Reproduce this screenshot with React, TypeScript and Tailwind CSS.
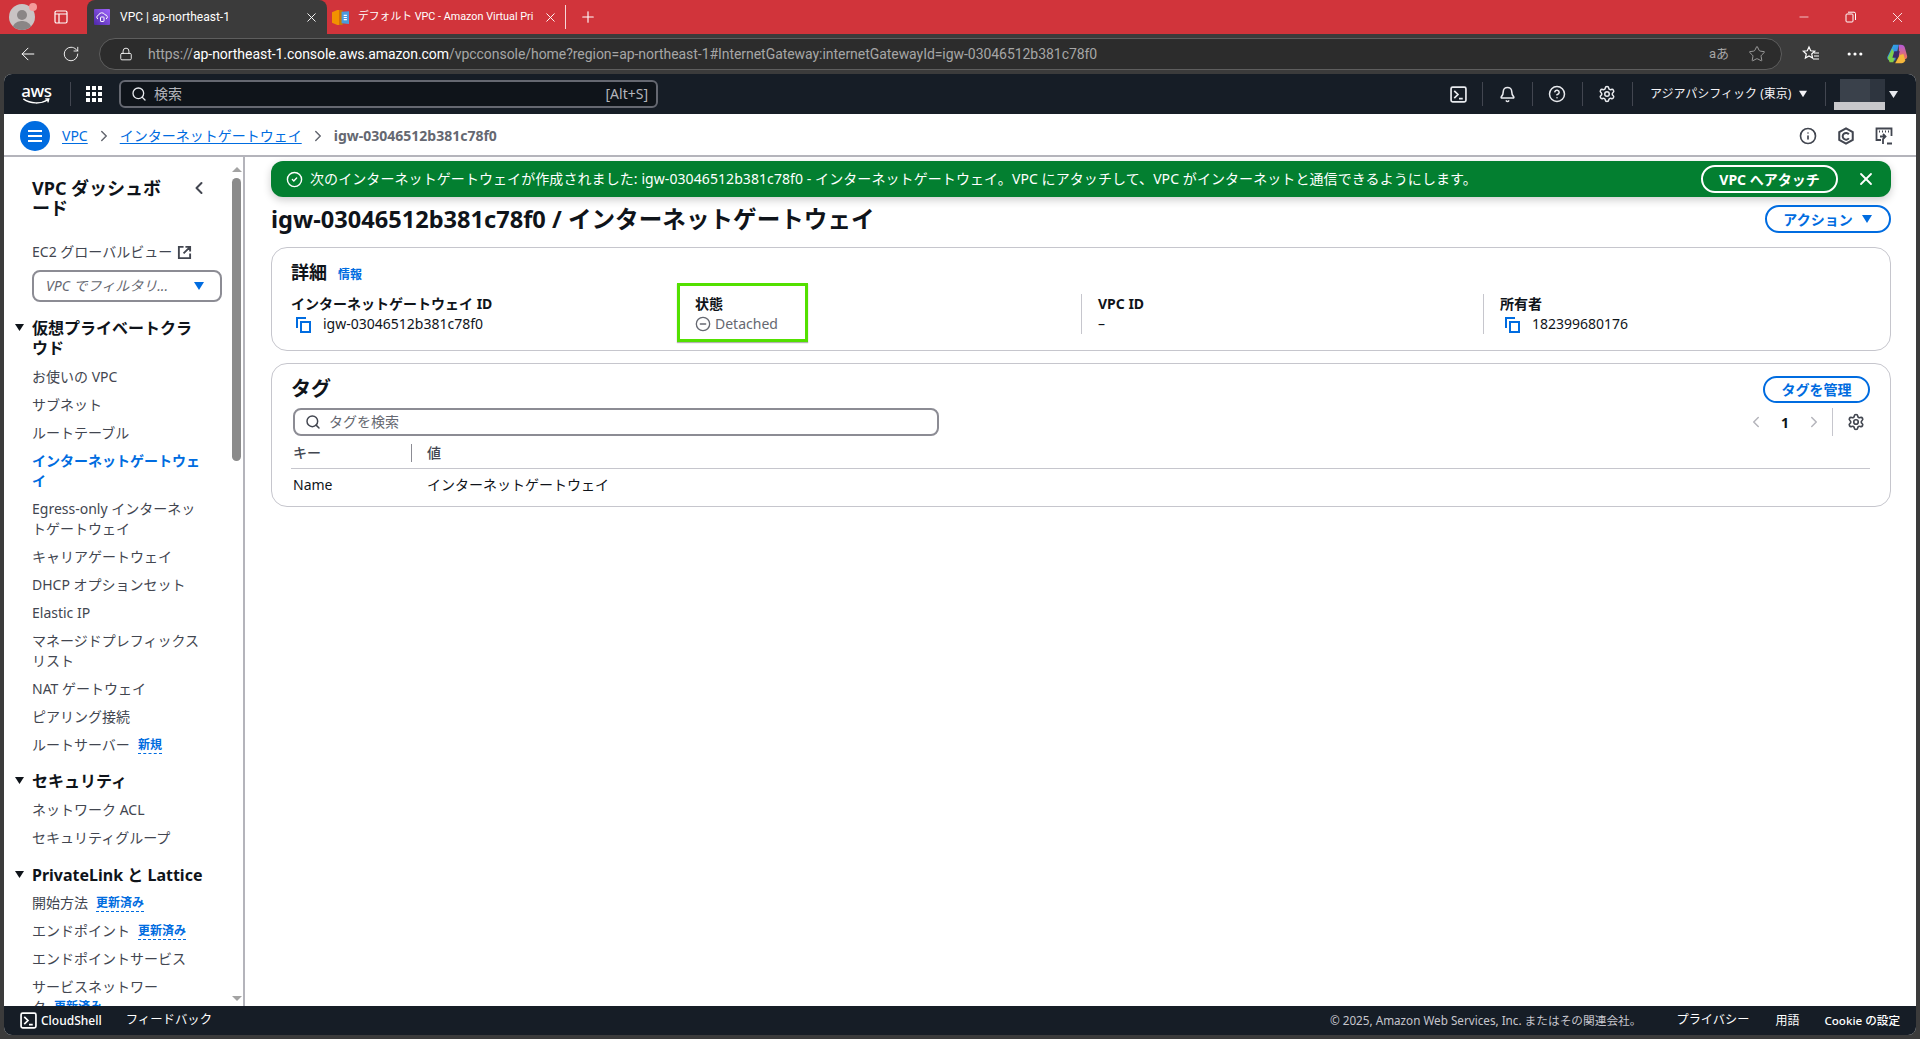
import React from 'react';
import {
  ArrowLeft,
  Bell,
  ChevronLeft,
  ChevronRight,
  CircleCheck,
  CircleHelp,
  CircleMinus,
  Ellipsis,
  Info,
  Lock,
  Minus,
  Plus,
  RotateCw,
  Search,
  Settings,
  Star,
  X,
} from 'lucide-react';

const font = 'font-["Noto_Sans","Noto_Sans_CJK_JP",sans-serif]';
const chromeFont = 'font-["Roboto","Noto_Sans_CJK_JP",sans-serif]';

function Caret({ className }: { className: string }) {
  return (
    <svg viewBox="0 0 12 10" className={className} fill="currentColor">
      <path d="M1 1h10L6 9z" />
    </svg>
  );
}

function CopyIcon() {
  return (
    <svg viewBox="0 0 17 17" className="w-[17px] h-[17px] text-[#006ce0]" fill="none" stroke="currentColor" strokeWidth="2">
      <path d="M2 12V2h9" />
      <rect x="6" y="6" width="9" height="10" />
    </svg>
  );
}

function TerminalIcon({ size }: { size: string }) {
  return (
    <svg viewBox="0 0 16 16" className={size} fill="none" stroke="currentColor" strokeWidth="1.6">
      <rect x="1" y="1" width="14" height="14" rx="1.5" />
      <path d="M4 4.5 7.5 8 4 11.5M8.5 11.8H12" />
    </svg>
  );
}

function VpcFavicon() {
  return (
    <svg viewBox="0 0 16 16" className="w-4 h-4">
      <defs>
        <linearGradient id="vpcg" x1="0" y1="1" x2="1" y2="0">
          <stop offset="0" stopColor="#4d27a8" />
          <stop offset="1" stopColor="#a166ff" />
        </linearGradient>
      </defs>
      <rect width="16" height="16" rx="1" fill="url(#vpcg)" />
      <path d="M4 10a2 2 0 0 1 .5-3.8A3.5 3.5 0 0 1 11 5.8 2.2 2.2 0 0 1 12 10" fill="none" stroke="#fff" strokeWidth="1" />
      <rect x="6.5" y="8" width="3.5" height="4.5" rx=".6" fill="none" stroke="#fff" strokeWidth="1" />
    </svg>
  );
}

function DocsFavicon() {
  return (
    <svg viewBox="0 0 16 16" className="w-[17px] h-[17px]">
      <path d="M0 3 5 1h2v14H5l-5-2z" fill="#f29100" />
      <path d="M7 1h3v14H7z" fill="#c97a00" />
      <path d="M9 2.500 16 2v12l-7-.5z" fill="#4a9bdc" />
      <path d="M11 6h3M11 8h3M11 10h3" stroke="#fff" strokeWidth="1" />
    </svg>
  );
}

function Copilot() {
  return (
    <svg viewBox="0 0 24 24" className="w-[22px] h-[22px]">
      <defs>
        <linearGradient id="cpa" x1="0" y1="0" x2="1" y2="1">
          <stop offset="0" stopColor="#2bb8e8" />
          <stop offset="1" stopColor="#3f6fe0" />
        </linearGradient>
        <linearGradient id="cpb" x1="0" y1="0" x2="0" y2="1">
          <stop offset="0" stopColor="#b45ad8" />
          <stop offset="1" stopColor="#f2754e" />
        </linearGradient>
      </defs>
      <path d="M8 2h6l-4 17H4.5C2 19 1 17 1.6 15z" fill="url(#cpa)" />
      <path d="M2 16 7 6l3 8-2 7H4z" fill="#7fcf4d" />
      <path d="M14 2h2c3 0 4 1.500 4.500 3L23 14c.5 2-.5 4-3 4h-6z" fill="url(#cpb)" />
      <path d="M10 22h7c2 0 3-1 4-3l-2-7-4 1z" fill="#f6b73c" />
      <path d="M9 9h6l-2 7H7z" fill="#3a2a6b" />
    </svg>
  );
}

function NavCell({ children }: { children: React.ReactNode }) {
  return (
    <div className="relative w-[50px] h-full flex items-center justify-center text-[#e8eaee]">
      <span className="absolute left-0 top-[8px] h-[24px] w-px bg-[#424650]" />
      {children}
    </div>
  );
}

function Item({ children, active }: { children: React.ReactNode; active?: boolean }) {
  return (
    <li className={active ? 'font-bold text-[#006ce0]' : 'text-[#424650]'}>
      {children}
    </li>
  );
}

function Badge({ label }: { label: string }) {
  return (
    <span className="inline-block align-top ml-2 h-[19px] leading-[19px] text-[12px] font-bold text-[#006ce0] border-b border-dashed border-[#006ce0]">{label}</span>
  );
}

function SectionTitle({ children, className }: { children: React.ReactNode; className: string }) {
  return (
    <div className={`relative text-[16px] font-bold leading-5 text-[#0f141a] ${className}`}>
      <Caret className="absolute -left-[18px] top-[5px] w-[11px] h-[9px] text-[#0f141a]" />
      {children}
    </div>
  );
}

function Sidebar() {
  return (
    <aside className="w-[241px] shrink-0 flex border-r-2 border-[#b4b4bb] overflow-hidden">
      <div className="w-[226px] pl-[28px] pt-[21px] shrink-0 text-[14px] leading-5">
        <div className="flex justify-between pr-[21px]">
          <div className="w-[138px] text-[18px] font-bold text-[#0f141a]">VPC ダッシュボード</div>
          <ChevronLeft className="w-[20px] h-[20px] text-[#424650] mt-[0px]" strokeWidth={2.4} />
        </div>
        <div className="mt-[24px] flex items-center gap-[5px] text-[#424650]">
          EC2 グローバルビュー
          <svg viewBox="0 0 16 16" className="w-[15px] h-[15px]" fill="none" stroke="currentColor" strokeWidth="2">
            <path d="M7 2H2v12h12V9M9 2h5v5M14 2 7 9" />
          </svg>
        </div>
        <div className="mt-[8px] w-[190px] h-[32px] rounded-[8px] border-2 border-[#8c8c94] flex items-center justify-between pl-[12px] pr-[15px] italic text-[#656871]">
          VPC でフィルタリ...
          <Caret className="w-[12px] h-[10px] text-[#006ce0]" />
        </div>
        <SectionTitle className="mt-[16px] w-[174px]">仮想プライベートクラウド</SectionTitle>
        <ul className="mt-[9px] w-[174px] flex flex-col gap-2">
          <Item>お使いの VPC</Item>
          <Item>サブネット</Item>
          <Item>ルートテーブル</Item>
          <Item active>インターネットゲートウェイ</Item>
          <Item>Egress-only インターネットゲートウェイ</Item>
          <Item>キャリアゲートウェイ</Item>
          <Item>DHCP オプションセット</Item>
          <Item>Elastic IP</Item>
          <Item>マネージドプレフィックスリスト</Item>
          <Item>NAT ゲートウェイ</Item>
          <Item>ピアリング接続</Item>
          <Item>
            ルートサーバー
            <Badge label="新規" />
          </Item>
        </ul>
        <SectionTitle className="mt-[16px]">セキュリティ</SectionTitle>
        <ul className="mt-[9px] flex flex-col gap-2">
          <Item>ネットワーク ACL</Item>
          <Item>セキュリティグループ</Item>
        </ul>
        <SectionTitle className="mt-[17px]">PrivateLink と Lattice</SectionTitle>
        <ul className="mt-2 w-[174px] flex flex-col gap-2">
          <Item>
            開始方法
            <Badge label="更新済み" />
          </Item>
          <Item>
            エンドポイント
            <Badge label="更新済み" />
          </Item>
          <Item>エンドポイントサービス</Item>
          <Item>
            サービスネットワー
            <br />
            ク
            <Badge label="更新済み" />
          </Item>
        </ul>
      </div>
      <div className="w-[13px] shrink-0 flex flex-col items-center pt-[10px] pb-[5px]">
        <span className="w-0 h-0 border-x-[5px] border-x-transparent border-b-[5px] border-b-[#a3a3a3]" />
        <span className="mt-[6px] w-[9px] h-[283px] rounded-full bg-[#8b8b8b]" />
        <span className="mt-auto w-0 h-0 border-x-[5px] border-x-transparent border-t-[5px] border-t-[#a3a3a3]" />
      </div>
    </aside>
  );
}

function Field({ label, children, first }: { label: string; children: React.ReactNode; first?: boolean }) {
  return (
    <div className={first ? '' : 'border-l border-[#c6c6cd] pl-[16px]'}>
      <div className="font-bold leading-5 text-[#0f141a]">{label}</div>
      <div className="leading-5 text-[#0f141a]">{children}</div>
    </div>
  );
}

function Main() {
  return (
    <main className="flex-1 pl-[26px] pr-[25px] pt-[4px] text-[14px]">
      <div className="h-[36px] rounded-[12px] bg-[#037f30] text-white flex items-center pl-[15px] pr-[15px] shadow-[0_3px_8px_rgba(0,0,0,0.2)]">
        <CircleCheck className="w-[17px] h-[17px]" strokeWidth={2} />
        <span className="ml-[7px] flex-1 -mt-[2px] tracking-[0.08px]">
          次のインターネットゲートウェイが作成されました: igw-03046512b381c78f0 - インターネットゲートウェイ。VPC にアタッチして、VPC がインターネットと通信できるようにします。
        </span>
        <button className="w-[137px] h-[28px] rounded-full border-2 border-white font-bold">VPC へアタッチ</button>
        <X className="ml-[18px] w-[20px] h-[20px]" strokeWidth={2.2} />
      </div>

      <div className="mt-[6px] h-[32px] flex items-center justify-between">
        <h1 className="text-[23.6px] font-bold leading-8 text-[#0f141a]">igw-03046512b381c78f0 / インターネットゲートウェイ</h1>
        <button className="w-[126px] h-[28px] rounded-full border-2 border-[#006ce0] text-[#006ce0] font-bold flex items-center justify-center gap-[8px]">
          アクション
          <Caret className="w-[12px] h-[10px]" />
        </button>
      </div>

      <section className="relative mt-[12px] h-[104px] rounded-[16px] border border-[#c6c6cd] pl-[19px] pt-[13px]">
        <div className="h-[22px] flex items-center gap-[11px]">
          <h2 className="text-[18px] font-bold text-[#0f141a]">詳細</h2>
          <span className="text-[12px] font-bold text-[#006ce0] mt-[5px]">情報</span>
        </div>
        <div className="mt-[11px] grid grid-cols-[387px_403px_402px_1fr]">
          <Field label="インターネットゲートウェイ ID" first>
            <span className="flex items-center gap-[11px] pl-[4px]">
              <CopyIcon />
              igw-03046512b381c78f0
            </span>
          </Field>
          <Field label="状態">
            <span className="flex items-center gap-[4px] text-[#656871]">
              <CircleMinus className="w-[16px] h-[16px]" strokeWidth={2} />
              Detached
            </span>
          </Field>
          <Field label="VPC ID">–</Field>
          <Field label="所有者">
            <span className="flex items-center gap-[11px] pl-[4px]">
              <CopyIcon />
              182399680176
            </span>
          </Field>
        </div>
        <div className="absolute left-[405px] top-[35px] w-[131px] h-[59px] border-[3px] border-[#53e000] shadow-[0_1px_1px_rgba(0,0,0,0.3)]" />
      </section>

      <section className="mt-[12px] h-[144px] rounded-[16px] border border-[#c6c6cd] pl-[19px] pr-[20px] pt-[12px]">
        <div className="h-[27px] flex items-center justify-between">
          <h2 className="text-[20px] font-bold text-[#0f141a] -mt-[2px]">タグ</h2>
          <button className="w-[107px] h-[27px] rounded-full border-2 border-[#006ce0] text-[#006ce0] font-bold">タグを管理</button>
        </div>
        <div className="mt-[5px] h-[28px] flex items-center justify-between">
          <div className="ml-[2px] w-[646px] h-[28px] rounded-[8px] border-2 border-[#8c8c94] flex items-center pl-[10px] gap-[8px] text-[#656871]">
            <Search className="w-[16px] h-[16px] text-[#424650]" strokeWidth={2.2} />
            <span className="-mt-[2px]">タグを検索</span>
          </div>
          <div className="flex items-center h-[28px] text-[#0f141a]">
            <ChevronLeft className="w-[18px] h-[18px] text-[#b4b4bb]" />
            <span className="w-[40px] text-center font-bold">1</span>
            <ChevronRight className="w-[18px] h-[18px] text-[#b4b4bb]" />
            <span className="ml-[9px] h-[28px] w-px bg-[#c6c6cd]" />
            <Settings className="ml-[14px] mr-[5px] w-[18px] h-[18px] text-[#424650]" strokeWidth={2.2} />
          </div>
        </div>
        <div className="mt-[7px] h-[26px] flex items-start border-b border-[#c6c6cd] text-[#424650] font-medium pl-[2px]">
          <span className="w-[118px] leading-5">キー</span>
          <span className="h-[18px] w-px mt-[1px] bg-[#8c8c94]" />
          <span className="ml-[15px] leading-5">値</span>
        </div>
        <div className="mt-[6px] flex pl-[2px] leading-5 text-[#0f141a]">
          <span className="w-[134px]">Name</span>
          <span>インターネットゲートウェイ</span>
        </div>
      </section>
    </main>
  );
}

export default function App() {
  return (
    <div className={`${font} w-[1920px] h-[1039px] flex flex-col overflow-hidden bg-[#3b3b3b]`}>
      {/* browser tabs */}
      <div className={`${chromeFont} h-[34px] shrink-0 flex items-center bg-[#d1343b] text-white text-[12px] pl-[9px]`}>
        <div className="relative w-[26px] h-[26px]">
          <div className="w-[26px] h-[26px] rounded-full bg-[#c9c4c4] overflow-hidden flex flex-col items-center justify-end">
            <span className="w-[10px] h-[10px] rounded-full bg-[#8a8686]" />
            <span className="w-[20px] h-[9px] mt-[1px] rounded-t-full bg-[#8a8686]" />
          </div>
          <span className="absolute right-[-2px] top-[-1px] w-[8px] h-[8px] rounded-full bg-[#f49a9a]" />
        </div>
        <svg viewBox="0 0 16 16" className="ml-[18px] w-[16px] h-[16px]" fill="none" stroke="currentColor" strokeWidth="1.2">
          <rect x="2" y="2" width="12" height="12" rx="1.5" />
          <path d="M2 5h12M6 5v9" />
        </svg>
        <div className="ml-[18px] w-[240px] h-full mt-[0px] rounded-t-[8px] bg-[#3b3b3b] flex items-center pl-[7px] pr-[8px]">
          <VpcFavicon />
          <span className="ml-[10px] flex-1">VPC | ap-northeast-1</span>
          <X className="w-[15px] h-[15px]" strokeWidth={1.5} />
        </div>
        <div className="w-[238px] h-full flex items-center pl-[5px] pr-[7px] border-r-0">
          <DocsFavicon />
          <span className="ml-[9px] flex-1 text-[10.8px] whitespace-nowrap">デフォルト VPC - Amazon Virtual Pri</span>
          <X className="ml-[5px] w-[15px] h-[15px]" strokeWidth={1.5} />
        </div>
        <span className="h-[24px] w-px bg-white/80" />
        <Plus className="ml-[13px] w-[18px] h-[18px]" strokeWidth={1.5} />
        <div className="ml-auto flex h-full">
          <div className="w-[47px] flex items-center justify-center">
            <Minus className="w-[14px] h-[14px]" strokeWidth={1.2} />
          </div>
          <div className="w-[47px] flex items-center justify-center">
            <svg viewBox="0 0 12 12" className="w-[12px] h-[12px]" fill="none" stroke="currentColor">
              <rect x="1" y="3" width="7" height="8" rx="1" />
              <path d="M3 1.200h6a1.500 1.500 0 0 1 1.500 1.500V9" />
            </svg>
          </div>
          <div className="w-[46px] flex items-center justify-center">
            <X className="w-[17px] h-[17px]" strokeWidth={1.2} />
          </div>
        </div>
      </div>

      {/* address bar */}
      <div className={`${chromeFont} h-[40px] shrink-0 flex items-center text-white`}>
        <ArrowLeft className="ml-[18px] w-[20px] h-[20px]" strokeWidth={1.2} />
        <RotateCw className="ml-[24px] w-[18px] h-[18px]" strokeWidth={1.2} />
        <div className="ml-[19px] w-[1683px] h-[32px] rounded-full bg-[#2c2c2c] border border-[#5e5e5e] flex items-center pl-[19px] pr-[15px] text-[14px] text-[#a6a6a6]">
          <Lock className="w-[14px] h-[14px] text-white" strokeWidth={1.5} />
          <span className="ml-[15px] flex-1 whitespace-nowrap overflow-hidden tracking-[-0.05px]">
            https://<span className="text-white">ap-northeast-1.console.aws.amazon.com</span>/vpcconsole/home?region=ap-northeast-1#InternetGateway:internetGatewayId=igw-03046512b381c78f0
          </span>
          <span className="text-[13px]">aあ</span>
          <Star className="ml-[19px] w-[18px] h-[18px]" strokeWidth={1.2} />
        </div>
        <svg viewBox="0 0 18 18" className="ml-[20px] w-[18px] h-[18px]" fill="none" stroke="currentColor" strokeWidth="1.2">
          <path d="M7 2l1.700 3.800 4 .4-3 2.800.9 4-3.600-2.100L3.400 13l.9-4-3-2.800 4-.4zM12 8h5M12 11h5M11 14h6" />
        </svg>
        <Ellipsis className="ml-[25px] w-[20px] h-[20px]" strokeWidth={1.8} />
        <span className="ml-[21px]">
          <Copilot />
        </span>
      </div>

      {/* console */}
      <div className="flex-1 min-h-0 mx-[4px] mb-[4px] rounded-[8px] overflow-hidden flex flex-col bg-white">
        <header className="h-[40px] shrink-0 bg-[#161d26] flex items-center text-white">
          <div className="ml-[17px] w-[31px] flex flex-col items-center">
            <span className="text-[17px] font-medium leading-[15px] tracking-tight">aws</span>
            <svg viewBox="0 0 32 8" className="w-[31px] h-[7px]" fill="none" stroke="currentColor" strokeWidth="1.600">
              <path d="M1 1c8 6 20 6 28 1M26 1h4l-1 4" />
            </svg>
          </div>
          <span className="ml-[18px] h-[24px] w-px bg-[#424650]" />
          <div className="ml-[15px] grid grid-cols-3 gap-[2px] w-[16px]">
            {Array.from({ length: 9 }).map((_, i) => (
              <span key={i} className="w-[4px] h-[4px] bg-white" />
            ))}
          </div>
          <div className="ml-[17px] w-[539px] h-[28px] rounded-[6px] border-2 border-[#656871] bg-[#0f141a] flex items-center pl-[10px] pr-[8px] text-[14px] text-[#b4b4bb]">
            <Search className="w-[16px] h-[16px] text-[#e8eaee]" strokeWidth={2} />
            <span className="ml-[7px] -mt-[2px]">検索</span>
            <span className="ml-auto -mt-[1px]">[Alt+S]</span>
          </div>
          <div className="ml-auto flex h-full items-center">
            <div className="w-[48px] flex justify-center text-[#e8eaee]">
              <TerminalIcon size="w-[17px] h-[17px]" />
            </div>
            <NavCell>
              <Bell className="w-[17px] h-[17px]" strokeWidth={2.2} />
            </NavCell>
            <NavCell>
              <CircleHelp className="w-[18px] h-[18px]" strokeWidth={2} />
            </NavCell>
            <NavCell>
              <Settings className="w-[18px] h-[18px]" strokeWidth={2} />
            </NavCell>
            <div className="relative w-[193px] h-full flex items-center pl-[18px] text-[12px] text-[#f3f3f7]">
              <span className="absolute left-0 top-[8px] h-[24px] w-px bg-[#424650]" />
              アジアパシフィック (東京)
              <Caret className="ml-[7px] w-[10px] h-[8px]" />
            </div>
            <div className="relative w-[91px] h-full flex items-center pl-[9px]">
              <span className="absolute left-0 top-[8px] h-[24px] w-px bg-[#424650]" />
              <div className="w-[51px] flex flex-col items-end">
                <div className="w-[45px] h-[23px] flex">
                  <span className="w-[30px] bg-[#3a414b]" />
                  <span className="w-[15px] bg-[#2e353f]" />
                </div>
                <span className="w-[51px] h-[8px] bg-[#c8c8cb]" />
              </div>
              <Caret className="ml-[3px] w-[11px] h-[9px] text-[#e8eaee]" />
            </div>
          </div>
        </header>

        <div className="h-[43px] shrink-0 border-b-2 border-[#b4b4bb] flex items-center text-[14px] pt-[2px] pl-[16px] pr-[23px]">
          <div className="w-[30px] h-[30px] rounded-full bg-[#006ce0] flex flex-col items-center justify-center gap-[3px]">
            <span className="w-[14px] h-[2px] bg-white" />
            <span className="w-[14px] h-[2px] bg-white" />
            <span className="w-[14px] h-[2px] bg-white" />
          </div>
          <a className="ml-[12px] text-[#006ce0] underline underline-offset-2">VPC</a>
          <ChevronRight className="mx-[7px] w-[18px] h-[18px] text-[#656871]" strokeWidth={2} />
          <a className="text-[#006ce0] underline underline-offset-2">インターネットゲートウェイ</a>
          <ChevronRight className="mx-[7px] w-[18px] h-[18px] text-[#656871]" strokeWidth={2} />
          <span className="font-bold text-[#656871]">igw-03046512b381c78f0</span>
          <div className="ml-auto flex items-center gap-[20px] text-[#424650]">
            <Info className="w-[18px] h-[18px]" strokeWidth={2.2} />
            <svg viewBox="0 0 16 16" className="w-[18px] h-[18px]" fill="none" stroke="currentColor" strokeWidth="1.800">
              <path d="M8 1.300 14 4.500v7L8 14.700 2 11.500v-7z" />
              <path d="M10.500 6.500A3 3 0 1 0 10.500 10" />
            </svg>
            <svg viewBox="0 0 18 18" className="w-[18px] h-[18px]" fill="none" stroke="currentColor" strokeWidth="1.800">
              <path d="M6 13H1.500V1.500h15V9" />
              <path d="M4 4.500h1M7 4.500h1M10 4.500h1M13 4.500h1" />
              <path d="M5 9.500h5M8 7l2.500 2.500L8 12v5M12 16.500h5" />
            </svg>
          </div>
        </div>

        <div className="flex-1 min-h-0 flex overflow-hidden">
          <Sidebar />
          <Main />
        </div>

        <footer className="h-[29px] shrink-0 bg-[#161d26] flex items-center text-[12px] text-white pl-[16px] pr-[16px]">
          <TerminalIcon size="w-[17px] h-[17px]" />
          <span className="ml-[4px] font-medium">CloudShell</span>
          <span className="ml-[24px] text-[12.4px]">フィードバック</span>
          <span className="ml-auto text-[11.7px] text-[#c6c6cd]">© 2025, Amazon Web Services, Inc. またはその関連会社。</span>
          <span className="ml-[35px] text-[12.2px]">プライバシー</span>
          <span className="ml-[26px]">用語</span>
          <span className="ml-[25px] text-[11.6px] font-medium">Cookie の設定</span>
        </footer>
      </div>
    </div>
  );
}
